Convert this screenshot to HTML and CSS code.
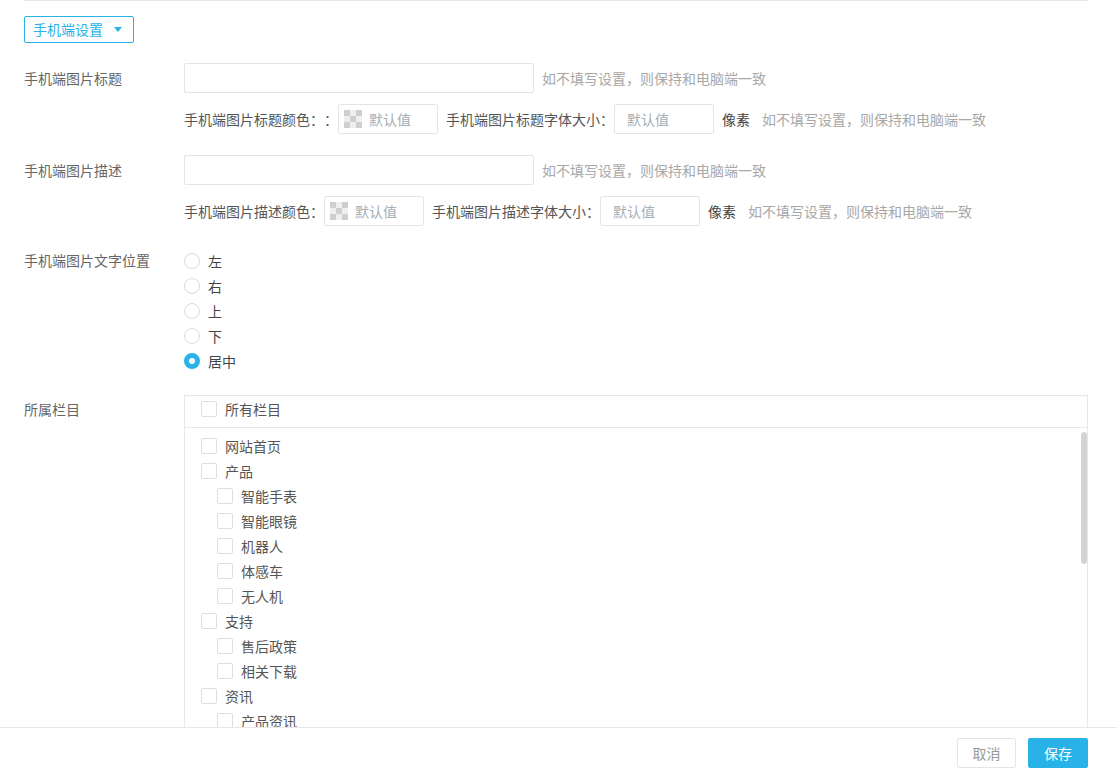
FILE: index.html
```html
<!DOCTYPE html>
<html lang="zh-CN">
<head>
<meta charset="utf-8">
<title>手机端设置</title>
<link rel="stylesheet" href="styles.css">
</head>
<body>
<div class="page">
  <div class="content">
    <div class="topline"></div>
    <button class="dropdown" type="button">手机端设置<span class="caret"></span></button>

    <div class="form-row row-title">
      <div class="label">手机端图片标题</div>
      <div class="field">
        <div class="line">
          <input class="text-input wide" type="text">
          <span class="hint">如不填写设置，则保持和电脑端一致</span>
        </div>
        <div class="line sub">
          <span class="sub-label">手机端图片标题颜色：：</span>
          <div class="color-box"><span class="checker"></span><span class="ph">默认值</span></div>
          <span class="sub-label gap">手机端图片标题字体大小：</span>
          <div class="size-box"><span class="ph">默认值</span></div>
          <span class="unit">像素</span>
          <span class="hint">如不填写设置，则保持和电脑端一致</span>
        </div>
      </div>
    </div>

    <div class="form-row row-desc">
      <div class="label">手机端图片描述</div>
      <div class="field">
        <div class="line">
          <input class="text-input wide" type="text">
          <span class="hint">如不填写设置，则保持和电脑端一致</span>
        </div>
        <div class="line sub">
          <span class="sub-label">手机端图片描述颜色：</span>
          <div class="color-box"><span class="checker"></span><span class="ph">默认值</span></div>
          <span class="sub-label gap">手机端图片描述字体大小：</span>
          <div class="size-box"><span class="ph">默认值</span></div>
          <span class="unit">像素</span>
          <span class="hint">如不填写设置，则保持和电脑端一致</span>
        </div>
      </div>
    </div>

    <div class="form-row row-pos">
      <div class="label label-short">手机端图片文字位置</div>
      <div class="field radios">
        <label class="radio"><span class="dot"></span>左</label>
        <label class="radio"><span class="dot"></span>右</label>
        <label class="radio"><span class="dot"></span>上</label>
        <label class="radio"><span class="dot"></span>下</label>
        <label class="radio checked"><span class="dot"></span>居中</label>
      </div>
    </div>

    <div class="form-row row-cat">
      <div class="label label-cat">所属栏目</div>
      <div class="field">
        <div class="cat-box">
          <div class="cat-head"><label class="check"><span class="box"></span>所有栏目</label></div>
          <div class="cat-list">
            <label class="check"><span class="box"></span>网站首页</label>
            <label class="check"><span class="box"></span>产品</label>
            <label class="check sub1"><span class="box"></span>智能手表</label>
            <label class="check sub1"><span class="box"></span>智能眼镜</label>
            <label class="check sub1"><span class="box"></span>机器人</label>
            <label class="check sub1"><span class="box"></span>体感车</label>
            <label class="check sub1"><span class="box"></span>无人机</label>
            <label class="check"><span class="box"></span>支持</label>
            <label class="check sub1"><span class="box"></span>售后政策</label>
            <label class="check sub1"><span class="box"></span>相关下载</label>
            <label class="check"><span class="box"></span>资讯</label>
            <label class="check sub1"><span class="box"></span>产品资讯</label>
            <div class="scrollbar"></div>
          </div>
        </div>
      </div>
    </div>
  </div>

  <div class="footer">
    <button class="btn btn-cancel" type="button">取消</button>
    <button class="btn btn-save" type="button">保存</button>
  </div>
</div>
</body>
</html>
```

FILE: styles.css
```css
* { box-sizing: border-box; }

html, body {
  margin: 0;
  padding: 0;
  background: #fff;
}

body {
  font-family: "Noto Sans CJK SC", "Microsoft YaHei", "Liberation Sans", sans-serif;
  font-size: 14px;
  color: #555;
  text-spacing-trim: space-all;
  font-feature-settings: "chws" 0, "halt" 0;
}

.page {
  height: 100vh;
  display: flex;
  flex-direction: column;
  overflow: hidden;
}

.content {
  flex: 1;
  overflow: hidden;
  padding: 0 29px 0 24px;
}

.topline {
  height: 1px;
  background: #e8e8e8;
}

.dropdown {
  margin-top: 15px;
  height: 27px;
  width: 110px;
  padding: 0 0 0 8px;
  display: flex;
  align-items: center;
  border: 1px solid #28b2e8;
  border-radius: 2px;
  background: #fff;
  color: #28b2e8;
  font-family: inherit;
  font-size: 14px;
  line-height: 25px;
  cursor: pointer;
}

.caret {
  margin-left: 11px;
  width: 0;
  height: 0;
  border-left: 4px solid transparent;
  border-right: 4px solid transparent;
  border-top: 5px solid #28b2e8;
}

.form-row {
  display: flex;
}

.label {
  width: 160px;
  flex: none;
  line-height: 30px;
  color: #666;
}

.field {
  flex: 1;
  min-width: 0;
}

.row-title { margin-top: 20px; }
.row-desc { margin-top: 21px; }
.row-pos { margin-top: 22px; }
.row-cat { margin-top: 22px; }

.line {
  display: flex;
  align-items: center;
  height: 30px;
  white-space: nowrap;
}

.line.sub {
  margin-top: 11px;
}

.text-input {
  height: 30px;
  border: 1px solid #e5e5e5;
  border-radius: 2px;
  outline: none;
  background: #fff;
  padding: 0 10px;
  font-family: inherit;
  font-size: 14px;
}

.text-input.wide {
  width: 350px;
}

.hint {
  margin-left: 8px;
  color: #a8a8a8;
}

.sub-label {
  color: #555;
}

.sub-label.gap {
  margin-left: 8px;
}

.color-box,
.size-box {
  width: 100px;
  height: 30px;
  border: 1px solid #e5e5e5;
  border-radius: 2px;
  display: flex;
  align-items: center;
}

.color-box {
  padding-left: 5px;
}

.size-box {
  padding-left: 12px;
}

.checker {
  width: 18px;
  height: 18px;
  flex: none;
  background: repeating-conic-gradient(#efefef 0 25%, #cfcfcf 0 50%) 0 0 / 12px 12px;
}

.ph {
  color: #a6aeb6;
}

.color-box .ph {
  margin-left: 7px;
}

.unit {
  margin-left: 8px;
  color: #444;
}

.unit + .hint {
  margin-left: 12px;
}

.label-short {
  line-height: 25px;
}

.radios {
  display: flex;
  flex-direction: column;
}

.radio {
  display: flex;
  align-items: center;
  height: 25px;
  color: #444;
}

.radio .dot {
  width: 16px;
  height: 16px;
  border: 1px solid #dcdcdc;
  border-radius: 50%;
  margin-right: 8px;
  background: #fff;
  flex: none;
}

.radio.checked .dot {
  border: 5px solid #28b2e8;
  background: #fff;
}

.label-cat {
  line-height: 29px;
}

.cat-box {
  border: 1px solid #e8e8e8;
  border-bottom: none;
}

.cat-head {
  height: 32px;
  border-bottom: 1px solid #e8e8e8;
  display: flex;
  align-items: center;
  padding: 0 0 5px 16px;
}

.check {
  display: flex;
  align-items: center;
  height: 25px;
  color: #555;
  white-space: nowrap;
}

.check .box {
  width: 16px;
  height: 16px;
  border: 1px solid #dedede;
  border-radius: 2px;
  background: #fff;
  margin-right: 8px;
  flex: none;
}

.cat-list {
  position: relative;
  height: 360px;
  overflow: hidden;
  padding: 5px 0 0 16px;
}

.check.sub1 {
  padding-left: 16px;
}

.scrollbar {
  position: absolute;
  right: 0;
  top: 4px;
  width: 6px;
  height: 132px;
  border-radius: 3px;
  background: #d3d3d3;
}

.footer {
  height: 50px;
  flex: none;
  border-top: 1px solid #e8e8e8;
  display: flex;
  align-items: center;
  justify-content: flex-end;
  gap: 12px;
  padding: 0 29px 0 0;
  background: #fff;
}

.btn {
  height: 30px;
  width: 60px;
  border-radius: 2px;
  font-family: inherit;
  font-size: 14px;
  cursor: pointer;
  padding: 0;
}

.btn-cancel {
  width: 59px;
  border: 1px solid #e5e5e5;
  background: #fff;
  color: #999;
}

.btn-save {
  border: 1px solid #28b2e8;
  background: #28b2e8;
  color: #fff;
}
```
